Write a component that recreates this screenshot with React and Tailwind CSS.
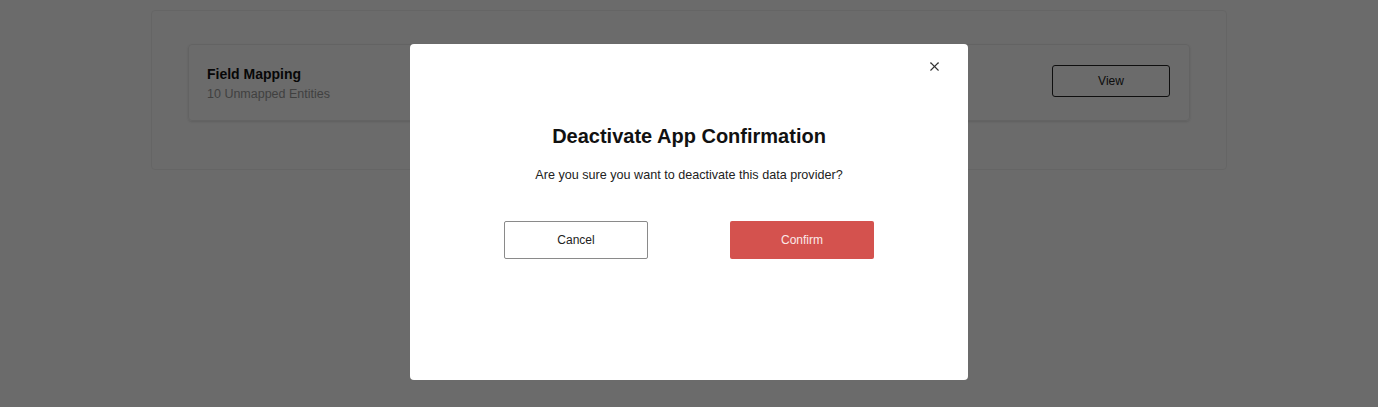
import { X } from 'lucide-react';

export default function App() {
  return (
    <div className="relative h-[407px] w-[1378px] overflow-hidden bg-white font-['Liberation_Sans',Arial,sans-serif]">
      {/* page behind the dialog */}
      <div className="px-[151px] pt-[10px]">
        <div className="h-[160px] rounded border border-[#f1f1f1] bg-white px-[36px] pt-[33px]">
          <div className="flex h-[77px] items-center justify-between rounded border border-[#ededed] pl-[18px] pr-[18px] shadow-sm">
            <div className="pt-[2px]">
              <div className="text-[14px] font-bold leading-[18px] text-[#111]">Field Mapping</div>
              <div className="mt-[3px] text-[12.5px] leading-[16px] text-[#9a9a9a]">10 Unmapped Entities</div>
            </div>
            <button className="mb-[4px] mr-[1px] h-[32px] w-[118px] rounded-[3px] border border-[#222] text-[12px] text-[#222]">
              View
            </button>
          </div>
        </div>
      </div>

      {/* overlay */}
      <div className="absolute inset-0 flex justify-center bg-black/[0.58] pt-[44px]">
        <div className="relative h-[336px] w-[558px] rounded-[4px] bg-white">
          <button className="absolute right-[26px] top-[15px] text-[#333]">
            <X size={15} strokeWidth={1.7} />
          </button>
          <div className="flex flex-col items-center pt-[80px]">
            <h2 className="text-[20px] font-bold leading-[24px] text-[#111]">Deactivate App Confirmation</h2>
            <p className="mt-[19px] text-[12.6px] leading-[16px] text-[#222]">
              Are you sure you want to deactivate this data provider?
            </p>
            <div className="mt-[38px] flex gap-[82px]">
              <button className="h-[38px] w-[144px] rounded-[2px] border border-[#8a8a8a] bg-white text-[12px] text-[#222]">
                Cancel
              </button>
              <button className="h-[38px] w-[144px] rounded-[2px] bg-[#d4524e] text-[12px] text-[#fbe9e8]">
                Confirm
              </button>
            </div>
          </div>
        </div>
      </div>
    </div>
  );
}
